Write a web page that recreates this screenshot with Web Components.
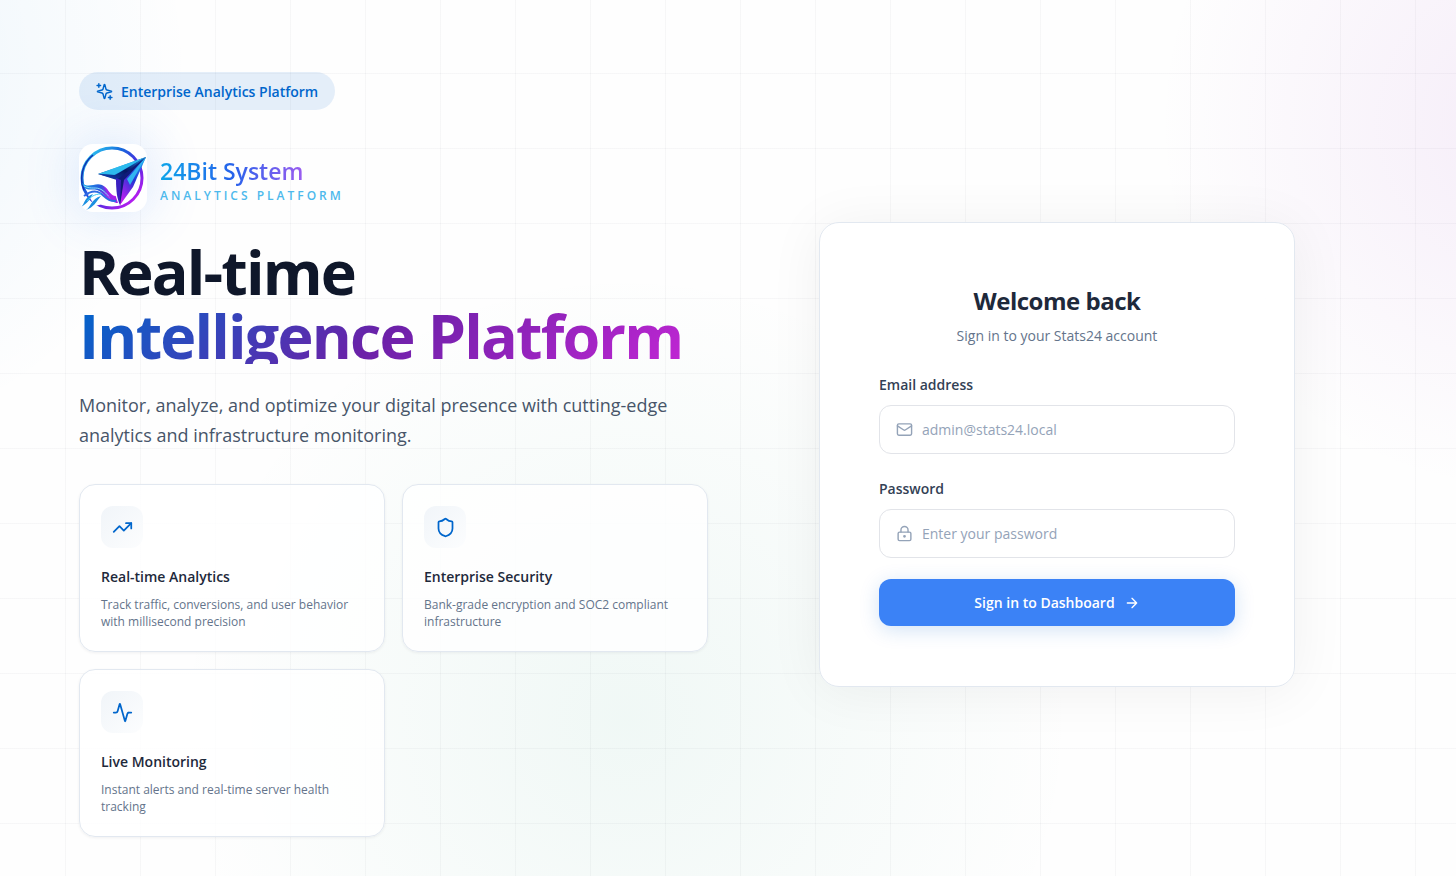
<!DOCTYPE html>
<html lang="en">
<head>
<meta charset="utf-8">
<meta name="viewport" content="width=device-width, initial-scale=1">
<title>Stats24 - Sign in</title>
<style>
body {
	margin: 0;
	background: #fefefe;
	color: #0f172a;
	font-family: "Segoe UI", "Open Sans", "Noto Sans", sans-serif;
	font-size: 15px;
}
</style>
</head>
<body>
<login-page>
	<hero-badge slot="intro">Enterprise Analytics Platform</hero-badge>
	<brand-mark slot="intro">24Bit System<span slot="tagline">ANALYTICS PLATFORM</span></brand-mark>
	<hero-title slot="intro">Real-time<span slot="accent">Intelligence Platform</span></hero-title>
	<hero-text slot="intro">Monitor, analyze, and optimize your digital presence with cutting-edge analytics and infrastructure monitoring.</hero-text>

	<feature-card slot="feature" icon="trending">
		<span slot="title">Real-time Analytics</span>
		Track traffic, conversions, and user behavior with millisecond precision
	</feature-card>
	<feature-card slot="feature" icon="shield">
		<span slot="title">Enterprise Security</span>
		Bank-grade encryption and SOC2 compliant infrastructure
	</feature-card>
	<feature-card slot="feature" icon="activity">
		<span slot="title">Live Monitoring</span>
		Instant alerts and real-time server health tracking
	</feature-card>

	<sign-in-card slot="form">
		<span slot="title">Welcome back</span>
		<span slot="subtitle">Sign in to your Stats24 account</span>
	</sign-in-card>
</login-page>

<script>
const icons = {
	sparkles: '<path d="M9.94 15.5A2 2 0 0 0 8.5 14.06l-6.13-1.58a.5.5 0 0 1 0-.96L8.5 9.94A2 2 0 0 0 9.94 8.5l1.58-6.13a.5.5 0 0 1 .96 0l1.58 6.13a2 2 0 0 0 1.44 1.44l6.13 1.58a.5.5 0 0 1 0 .96l-6.13 1.58a2 2 0 0 0-1.44 1.44l-1.58 6.13a.5.5 0 0 1-.96 0z"/><path d="M4 1v5M1.5 3.5h5M20 18v5M17.5 20.5h5"/>',
	trending: '<path d="M22 7l-8.5 8.5-5-5L2 17"/><path d="M16 7h6v6"/>',
	shield: '<path d="M20 13c0 5-3.5 7.5-7.66 8.95a1 1 0 0 1-.67-.01C7.5 20.5 4 18 4 13V6a1 1 0 0 1 1-1c2 0 4.5-1.2 6.24-2.72a1.17 1.17 0 0 1 1.52 0C14.51 3.81 17 5 19 5a1 1 0 0 1 1 1z"/>',
	activity: '<path d="M22 12h-2.48a2 2 0 0 0-1.93 1.46l-2.35 8.36a.25.25 0 0 1-.48 0L9.24 2.18a.25.25 0 0 0-.48 0l-2.35 8.36A2 2 0 0 1 4.49 12H2"/>',
	mail: '<rect x="2" y="4" width="20" height="16" rx="2"/><path d="M22 7l-8.97 5.7a1.94 1.94 0 0 1-2.06 0L2 7"/>',
	lock: '<circle cx="12" cy="16" r="1"/><rect x="3" y="10" width="18" height="12" rx="2"/><path d="M7 10V7a5 5 0 0 1 10 0v3"/>',
	arrow: '<path d="M5 12h14M12 5l7 7-7 7"/>'
};

const makeTemplate = (html) => {
	const template = document.createElement('template');
	template.innerHTML = html;
	return template;
};

class BaseElement extends HTMLElement {
	constructor() {
		super();
		this.attachShadow({ mode: 'open' });
		this.shadowRoot.appendChild(this.constructor.template.content.cloneNode(true));
	}
}

class UiIcon extends BaseElement {
	static observedAttributes = ['name'];

	static template = makeTemplate(`
<style>
:host {
	display: block;
	flex: none;
	width: var(--icon-size, 20px);
	height: var(--icon-size, 20px);
}
svg {
	display: block;
	width: 100%;
	height: 100%;
	fill: none;
	stroke: currentColor;
	stroke-width: 2;
	stroke-linecap: round;
	stroke-linejoin: round;
}
</style>
<svg viewBox="0 0 24 24" aria-hidden="true"></svg>
`);

	attributeChangedCallback(attr, oldValue, newValue) {
		this.shadowRoot.querySelector('svg').innerHTML = icons[newValue] || '';
	}
}

class LoginPage extends BaseElement {
	static template = makeTemplate(`
<style>
:host {
	display: block;
	min-height: 100vh;
	background:
		linear-gradient(rgba(15, 23, 42, .03) 1px, transparent 1px) 65px 73px / 75px 75px,
		linear-gradient(90deg, rgba(15, 23, 42, .03) 1px, transparent 1px) 65px 73px / 75px 75px,
		radial-gradient(circle 370px at 105% 14%, rgba(168, 85, 200, .1), transparent),
		radial-gradient(circle 380px at -13% 8%, rgba(0, 130, 220, .08), transparent),
		radial-gradient(circle 450px at 43% 82%, rgba(16, 150, 110, .06), transparent),
		#fefefe;
}
main {
	box-sizing: border-box;
	min-height: 100vh;
	display: grid;
	grid-template-columns: 629fr 640fr;
	column-gap: 29px;
	align-items: center;
	padding: 72px 79px 39px;
}
.intro {
	display: flex;
	flex-direction: column;
	align-items: flex-start;
}
.features {
	align-self: stretch;
	display: grid;
	grid-template-columns: 1fr 1fr;
	gap: 17px;
	margin-top: 34px;
}
.form {
	display: flex;
	justify-content: center;
}
@media (max-width: 1000px) {
	main { grid-template-columns: 1fr; row-gap: 48px; padding: 40px 24px; }
}
@media (max-width: 600px) {
	.features { grid-template-columns: 1fr; }
}
</style>
<main>
	<div class="intro">
		<slot name="intro"></slot>
		<div class="features"><slot name="feature"></slot></div>
	</div>
	<div class="form"><slot name="form"></slot></div>
</main>
`);
}

class HeroBadge extends BaseElement {
	static template = makeTemplate(`
<style>
:host {
	--icon-size: 17px;
	display: flex;
	align-items: center;
	gap: 8px;
	height: 38px;
	padding: 0 17px;
	border-radius: 19px;
	background: rgba(0, 102, 204, .1);
	color: #0066cc;
	font-size: 14px;
	font-weight: 600;
}
</style>
<ui-icon name="sparkles"></ui-icon>
<span><slot></slot></span>
`);
}

class BrandMark extends BaseElement {
	static template = makeTemplate(`
<style>
:host {
	display: flex;
	align-items: center;
	gap: 13px;
	margin-top: 34px;
}
svg {
	display: block;
	width: 68px;
	height: 68px;
	border-radius: 14px;
	background: white;
	box-shadow: 0 0 56px rgba(59, 130, 246, .2);
}
.text {
	padding-top: 4px;
}
.name {
	width: max-content;
	font-size: 23px;
	line-height: 30px;
	font-weight: 600;
	background: linear-gradient(90deg, #0ea5e9, #2563eb 50%, #9b5cf0);
	-webkit-background-clip: text;
	background-clip: text;
	color: transparent;
}
.tagline {
	font-size: 12px;
	line-height: 19px;
	font-weight: 600;
	letter-spacing: 3px;
	color: #4db9ec;
}
</style>
<svg viewBox="0 0 68 68" role="img" aria-label="24Bit System logo">
	<defs>
		<linearGradient id="ring" x1=".1" y1=".1" x2=".9" y2=".9">
			<stop offset="0" stop-color="#2cc4f0"/>
			<stop offset=".3" stop-color="#1668dc"/>
			<stop offset=".6" stop-color="#4a2ce0"/>
			<stop offset="1" stop-color="#c01cf0"/>
		</linearGradient>
		<linearGradient id="wing" x1="0" y1=".6" x2="1" y2="0">
			<stop offset="0" stop-color="#0b2a86"/>
			<stop offset=".3" stop-color="#28b4f0"/>
			<stop offset=".65" stop-color="#1279e0"/>
			<stop offset="1" stop-color="#0a3a8e"/>
		</linearGradient>
		<linearGradient id="under" x1="0" y1="1" x2="1" y2="0">
			<stop offset="0" stop-color="#1450c8"/>
			<stop offset=".5" stop-color="#061460"/>
			<stop offset="1" stop-color="#1d8fe6"/>
		</linearGradient>
		<linearGradient id="fin" x1=".8" y1="0" x2=".1" y2="1">
			<stop offset="0" stop-color="#1c9ff0"/>
			<stop offset=".45" stop-color="#2434d4"/>
			<stop offset="1" stop-color="#d21cf5"/>
		</linearGradient>
		<linearGradient id="ribbon" x1="0" y1="0" x2="1" y2=".3">
			<stop offset="0" stop-color="#18a8e8"/>
			<stop offset=".55" stop-color="#2858dc"/>
			<stop offset="1" stop-color="#c41cf0"/>
		</linearGradient>
	</defs>
	<circle cx="33" cy="34" r="30" fill="none" stroke="url(#ring)" stroke-width="3"/>
	<path d="M5 46A30 30 0 0 1 14 11" fill="none" stroke="#1230b0" stroke-width="1.5"/>
	<path d="M9 51l7-8 14 4-2 12-12 3z" fill="white"/>
	<path d="M3 39c7 6 13-1 20 2 6 3 8 11 14 11l-1 5c-9 1-11-9-18-11S7 49 3 39z" fill="url(#ribbon)"/>
	<path d="M5 42c8 4 12 0 18 4s7 9 13 9" fill="none" stroke="#8be1fa"/>
	<path d="M24 42c7 3 5 10 13 11l2 6c-9 0-8-9-15-17z" fill="#a022e8"/>
	<path d="M5 52c5-4 11-6 16-3s8 9 16 8" fill="none" stroke="#2e6be4" stroke-width="2"/>
	<path d="M2 63c4-3 3-10 12-13-3 5-5 9-12 13zM7 66c5-3 5-11 15-14-5 6-7 11-15 14z" fill="#1c8fe0"/>
	<path d="M8 57c4-4 7-7 14-7" fill="none" stroke="#3ccaf4"/>
	<path d="M67 13L19 30l22 6z" fill="url(#wing)"/>
	<path d="M67 13L19 30l16 1z" fill="#2dbbed"/>
	<path d="M67 13L36 31l-17-1 22 7z" fill="url(#under)"/>
	<path d="M67 13L39 35l2 26z" fill="#101a78"/>
	<path d="M67 13L45 36l-4 25 13-18z" fill="url(#fin)"/>
	<path d="M67 13L48 35l3 6z" fill="#31b5f2"/>
	<path d="M37 34l5 2-1 25c-3-6-4-14-4-27z" fill="#3a20c0"/>
</svg>
<div class="text">
	<div class="name"><slot></slot></div>
	<div class="tagline"><slot name="tagline"></slot></div>
</div>
`);
}

class HeroTitle extends BaseElement {
	static template = makeTemplate(`
<style>
:host {
	display: block;
	margin-top: 28px;
}
h1 {
	margin: 0;
	font-size: 61px;
	line-height: 64px;
	font-weight: 700;
	letter-spacing: -0.03em;
}
/* the gradient is painted only inside this box, so the descender is cut */
.accent {
	display: block;
	width: max-content;
	max-width: 100%;
	padding-top: 4px;
	line-height: 56px;
	background: linear-gradient(135deg, #0066cc, #6b21a8 50%, #c026d3);
	-webkit-background-clip: text;
	background-clip: text;
	color: transparent;
}
</style>
<h1><slot></slot><span class="accent"><slot name="accent"></slot></span></h1>
`);
}

class HeroText extends BaseElement {
	static template = makeTemplate(`
<style>
:host {
	display: block;
	margin-top: 26px;
	color: #475569;
	font-size: 18px;
	line-height: 30px;
}
p { margin: 0; }
</style>
<p><slot></slot></p>
`);
}

class FeatureCard extends BaseElement {
	static template = makeTemplate(`
<style>
:host {
	--icon-size: 21px;
	display: block;
	padding: 21px;
	border: 1px solid #e2e8f0;
	border-radius: 16px;
	background: rgba(255, 255, 255, .8);
	box-shadow: 0 1px 3px rgba(15, 23, 42, .06);
}
.tile {
	width: 42px;
	height: 42px;
	display: grid;
	place-items: center;
	border-radius: 12px;
	background: linear-gradient(135deg, #f1f5f9, #fcfdfe);
	color: #0066cc;
}
h3 {
	margin: 18px 0 0;
	color: #1e293b;
	font-size: 14px;
	line-height: 22px;
	font-weight: 600;
}
p {
	margin: 8px 0 0;
	color: #64748b;
	font-size: 12px;
	line-height: 17px;
}
</style>
<div class="tile"><ui-icon></ui-icon></div>
<h3><slot name="title"></slot></h3>
<p><slot></slot></p>
`);

	connectedCallback() {
		this.shadowRoot.querySelector('ui-icon').setAttribute('name', this.getAttribute('icon'));
	}
}

class FormField extends BaseElement {
	static template = makeTemplate(`
<style>
:host {
	--icon-size: 17px;
	display: block;
}
label {
	display: block;
	margin-bottom: 10px;
	color: #334155;
	font-size: 14px;
	line-height: 20px;
	font-weight: 600;
}
.control {
	display: flex;
	align-items: center;
	gap: 9px;
	height: 47px;
	padding: 0 16px;
	border: 1px solid #e2e4e9;
	border-radius: 12px;
	background: white;
	color: #94a3b8;
}
.control:focus-within {
	border-color: #3b82f6;
}
input {
	flex: 1;
	min-width: 0;
	height: 100%;
	padding: 0;
	border: 0;
	outline: 0;
	background: transparent;
	color: #0f172a;
	font-family: inherit;
	font-size: 14px;
}
input::placeholder {
	color: #94a3b8;
	opacity: 1;
}
</style>
<label for="field"><slot></slot></label>
<div class="control">
	<ui-icon></ui-icon>
	<input id="field">
</div>
`);

	connectedCallback() {
		const input = this.shadowRoot.querySelector('input');
		input.type = this.getAttribute('type');
		input.name = this.getAttribute('name');
		input.placeholder = this.getAttribute('placeholder');
		this.shadowRoot.querySelector('ui-icon').setAttribute('name', this.getAttribute('icon'));
	}
}

class SignInCard extends BaseElement {
	static template = makeTemplate(`
<style>
:host {
	display: block;
	box-sizing: border-box;
	width: 100%;
	max-width: 476px;
	padding: 60px 59px;
	border: 1px solid #e2e8f0;
	border-radius: 20px;
	background: rgba(255, 255, 255, .95);
	box-shadow: 0 4px 56px rgba(15, 23, 42, .06);
}
h2 {
	margin: 0;
	color: #1e293b;
	font-size: 24px;
	line-height: 36px;
	font-weight: 700;
	letter-spacing: -0.02em;
	text-align: center;
}
p {
	margin: 5px 0 27px;
	color: #64748b;
	font-size: 14px;
	line-height: 24px;
	text-align: center;
}
form {
	display: grid;
	row-gap: 21px;
}
form-field + form-field {
	margin-top: 4px;
}
button {
	--icon-size: 16px;
	display: flex;
	align-items: center;
	justify-content: center;
	gap: 9px;
	height: 47px;
	border: 0;
	border-radius: 12px;
	background: #3b82f6;
	box-shadow: 0 4px 20px rgba(0, 102, 204, .18);
	color: white;
	font-family: inherit;
	font-size: 14px;
	font-weight: 600;
	cursor: pointer;
}
</style>
<h2><slot name="title"></slot></h2>
<p><slot name="subtitle"></slot></p>
<form>
	<form-field type="email" name="email" icon="mail" placeholder="admin@stats24.local">Email address</form-field>
	<form-field type="password" name="password" icon="lock" placeholder="Enter your password">Password</form-field>
	<button type="submit">Sign in to Dashboard <ui-icon name="arrow"></ui-icon></button>
</form>
`);

	connectedCallback() {
		this.shadowRoot.querySelector('form').addEventListener('submit', (e) => e.preventDefault());
	}
}

window.customElements.define('ui-icon', UiIcon);
window.customElements.define('hero-badge', HeroBadge);
window.customElements.define('brand-mark', BrandMark);
window.customElements.define('hero-title', HeroTitle);
window.customElements.define('hero-text', HeroText);
window.customElements.define('feature-card', FeatureCard);
window.customElements.define('form-field', FormField);
window.customElements.define('sign-in-card', SignInCard);
window.customElements.define('login-page', LoginPage);
</script>
</body>
</html>
